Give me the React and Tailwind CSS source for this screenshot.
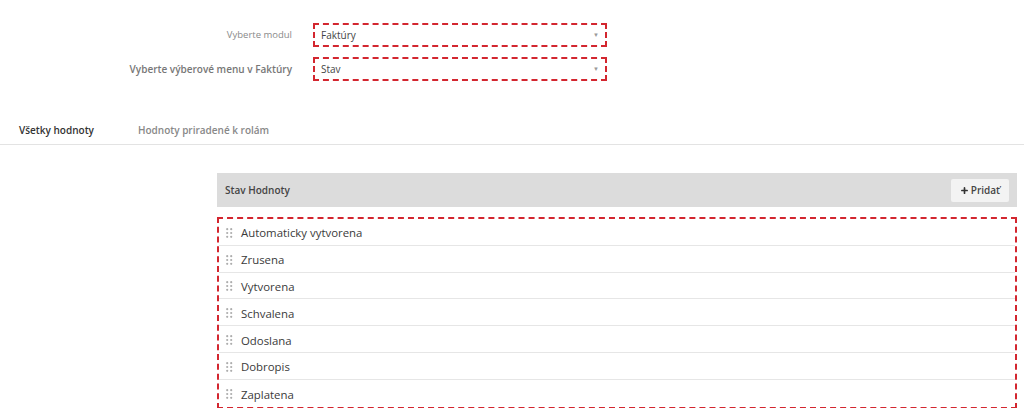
import { Plus } from 'lucide-react'

const items = ['Automaticky vytvorena', 'Zrusena', 'Vytvorena', 'Schvalena', 'Odoslana', 'Dobropis', 'Zaplatena']

function Grip() {
  return (
    <svg width="7" height="10" viewBox="0 0 7 10" className="flex-shrink-0">
      {[1.2, 5.2].map((x) =>
        [1.2, 5, 8.8].map((y) => <circle key={`${x}-${y}`} cx={x} cy={y} r="1.1" fill="#adadad" />)
      )}
    </svg>
  )
}

function Select({ value }) {
  return (
    <div className="w-[294px] h-[24px] border-2 border-dashed border-[#d3262f] flex items-center justify-between pl-[6px] pr-[6px] text-[10px] text-[#444]">
      <span>{value}</span>
      <span className="text-[6px] text-[#999]">▼</span>
    </div>
  )
}

export default function App() {
  return (
    <div className="w-[1024px] h-[408px] bg-white overflow-hidden" style={{ fontFamily: '"Open Sans", sans-serif' }}>
      <div className="pt-[23px] flex flex-col gap-[10px]">
        <div className="flex items-center gap-[21px]">
          <div className="w-[292px] text-right text-[9.5px] text-[#8a8a8a]">Vyberte modul</div>
          <Select value="Faktúry" />
        </div>
        <div className="flex items-center gap-[21px]">
          <div className="w-[292px] text-right text-[10px] font-semibold text-[#777]">Vyberte výberové menu v Faktúry</div>
          <Select value="Stav" />
        </div>
      </div>

      <div className="mt-[42px] border-b border-[#e3e3e3] flex gap-[44px] pl-[19px] pb-[6px] text-[10px] font-semibold">
        <span className="text-[#333]">Všetky hodnoty</span>
        <span className="text-[#888]">Hodnoty priradené k rolám</span>
      </div>

      <div className="ml-[217px] w-[800px] mt-[28px]">
        <div className="h-[34px] bg-[#dcdcdc] flex items-center justify-between pl-[8px] pr-[8px]">
          <span className="text-[10px] font-semibold text-[#444]">Stav Hodnoty</span>
          <button className="h-[23px] px-[9px] bg-[#f3f3f3] flex items-center gap-[2px] text-[10px] font-semibold text-[#444] rounded-[2px]">
            <Plus size={9} strokeWidth={4.5} color="#333" />
            Pridať
          </button>
        </div>
        <div className="mt-[10px] border-2 border-dashed border-[#d3262f]">
          {items.map((it, i) => (
            <div
              key={it}
              className={`h-[26.8px] flex items-center gap-[8px] pl-[7px] pt-[2px] text-[11.4px] text-[#3a3a3a] ${i < items.length - 1 ? 'border-b border-[#e6e6e6]' : ''}`}
            >
              <Grip />
              {it}
            </div>
          ))}
        </div>
      </div>
    </div>
  )
}
